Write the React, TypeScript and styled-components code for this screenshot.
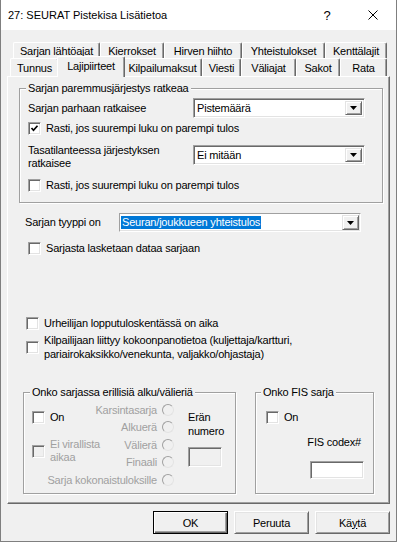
import React from "react";
import styled, { createGlobalStyle, css } from "styled-components";

const Global = createGlobalStyle`
  html, body { margin: 0; padding: 0; background: #ffffff; }
  #root { width: 397px; height: 542px; }
`;

const Win = styled.div`
  width: 397px;
  height: 542px;
  box-sizing: border-box;
  border: 1px solid #7f7f7f;
  border-top: none;
  display: flex;
  flex-direction: column;
  background: #f0f0f0;
  color: #000;
  font-family: "Liberation Sans", Arial, sans-serif;
  font-size: 11px;
  overflow: hidden;
`;

const TitleBar = styled.div`
  height: 30px;
  flex: none;
  display: flex;
  align-items: center;
  background: #ffffff;
`;

const TitleText = styled.div`
  flex: 1;
  padding-left: 7px;
  white-space: nowrap;
`;

const CaptionButton = styled.div`
  width: 46px;
  height: 30px;
  display: flex;
  align-items: center;
  justify-content: center;
  font-size: 13px;
`;

const Client = styled.div`
  flex: 1;
  display: flex;
  flex-direction: column;
  padding: 12px 6px 7px 6px;
  letter-spacing: -0.2px;
`;

const TabRow = styled.div<{ $indent: number; $h: number }>`
  display: flex;
  align-items: flex-end;
  height: ${(p) => p.$h}px;
  margin-left: ${(p) => p.$indent}px;
`;

const Tab = styled.div<{ $w: number; $active?: boolean }>`
  box-sizing: border-box;
  width: ${(p) => p.$w}px;
  height: 100%;
  display: flex;
  align-items: center;
  justify-content: center;
  white-space: nowrap;
  background: #f0f0f0;
  border-top: 1px solid #ffffff;
  border-left: 1px solid #ffffff;
  border-right: 1px solid #696969;
  box-shadow: inset -1px 0 0 #a0a0a0;
  border-radius: 2px 2px 0 0;
  ${(p) =>
    p.$active &&
    css`
      width: ${p.$w + 4}px;
      height: 21px;
      margin: 0 -2px -1px -2px;
      padding-bottom: 3px;
      position: relative;
      z-index: 2;
    `}
`;

const Panel = styled.div`
  box-sizing: border-box;
  width: 383px;
  height: 428px;
  flex: none;
  border: 1px solid;
  border-color: #ffffff #696969 #696969 #ffffff;
  box-shadow: inset -1px -1px 0 #a0a0a0;
  display: flex;
  flex-direction: column;
`;

const Group = styled.div<{ $w: number; $h: number; $ml?: number; $mt?: number }>`
  position: relative;
  box-sizing: border-box;
  flex: none;
  width: ${(p) => p.$w}px;
  height: ${(p) => p.$h}px;
  margin-left: ${(p) => p.$ml ?? 0}px;
  margin-top: ${(p) => p.$mt ?? 0}px;
  border: 1px solid #a0a0a0;
  box-shadow: inset 1px 1px 0 #ffffff, 1px 1px 0 #ffffff;
`;

const GroupTitle = styled.span<{ $left: number }>`
  position: absolute;
  top: -7px;
  left: ${(p) => p.$left}px;
  padding: 0 2px;
  line-height: 13px;
  background: #f0f0f0;
  white-space: nowrap;
`;

const GroupBody = styled.div<{ $pt: number; $pl: number; $pr?: number }>`
  display: flex;
  flex-direction: column;
  padding: ${(p) => p.$pt}px ${(p) => p.$pr ?? 0}px 0 ${(p) => p.$pl}px;
`;

const FieldRow = styled.div<{ $mt?: number; $ml?: number; $top?: boolean; $label: number }>`
  display: flex;
  align-items: ${(p) => (p.$top ? "flex-start" : "center")};
  margin-top: ${(p) => p.$mt ?? 0}px;
  margin-left: ${(p) => p.$ml ?? 0}px;
  & > span:first-child {
    width: ${(p) => p.$label}px;
    flex: none;
    line-height: 13px;
    margin-top: ${(p) => (p.$top ? -1 : 0)}px;
  }
`;

const Combo = styled.div<{ $w: number; $h: number; $flat?: boolean }>`
  box-sizing: border-box;
  width: ${(p) => p.$w}px;
  height: ${(p) => p.$h}px;
  flex: none;
  display: flex;
  align-items: center;
  background: #ffffff;
  border: 1px solid;
  border-color: #a0a0a0 #ffffff #ffffff #a0a0a0;
  box-shadow: ${(p) =>
    p.$flat ? "inset -1px -1px 0 #e3e3e3" : "inset 1px 1px 0 #696969, inset -1px -1px 0 #e3e3e3"};
  padding: ${(p) => (p.$flat ? "1px" : "2px")};
`;

const ComboText = styled.span<{ $selected?: boolean }>`
  flex: 1;
  padding-left: ${(p) => (p.$selected ? 0 : 1)}px;
  white-space: nowrap;
  line-height: 13px;
  ${(p) =>
    p.$selected &&
    css`
      flex: none;
      margin-right: auto;
      background: #0078d7;
      color: #ffffff;
      padding: 0 1px;
    `}
`;

const DropButton = styled.div`
  box-sizing: border-box;
  width: 17px;
  height: 100%;
  flex: none;
  display: flex;
  align-items: center;
  justify-content: center;
  background: #f0f0f0;
  border: 1px solid;
  border-color: #e3e3e3 #696969 #696969 #e3e3e3;
  box-shadow: inset 1px 1px 0 #ffffff, inset -1px -1px 0 #a0a0a0;
`;

const CheckLabel = styled.label<{ $ml?: number; $mt?: number; $disabled?: boolean; $lh?: number }>`
  display: flex;
  align-items: center;
  gap: 5px;
  margin-left: ${(p) => p.$ml ?? 0}px;
  margin-top: ${(p) => p.$mt ?? 0}px;
  min-height: 15px;
  line-height: ${(p) => p.$lh ?? 13}px;
  color: ${(p) => (p.$disabled ? "#a0a0a0" : "#000")};
`;

const Box = styled.span<{ $disabled?: boolean }>`
  box-sizing: border-box;
  width: 13px;
  height: 13px;
  flex: none;
  display: flex;
  align-items: center;
  justify-content: center;
  border: 1px solid;
  border-color: #a0a0a0 #ffffff #ffffff #a0a0a0;
  box-shadow: inset 1px 1px 0 #696969, inset -1px -1px 0 #e3e3e3;
  background: ${(p) => (p.$disabled ? "#f0f0f0" : "#ffffff")};
`;

const Plain = styled.div<{ $mt?: number; $ml?: number }>`
  display: flex;
  flex-direction: column;
  margin-top: ${(p) => p.$mt ?? 0}px;
  margin-left: ${(p) => p.$ml ?? 0}px;
`;

const BottomGroups = styled.div`
  display: flex;
  gap: 19px;
  margin-top: 31px;
  margin-left: 15px;
`;

const EraGrid = styled.div`
  display: grid;
  grid-template-columns: 142px 40px;
  column-gap: 14px;
  padding: 8px 0 0 8px;
`;

const LeftCol = styled.div`
  grid-area: 1 / 1;
  justify-self: start;
  display: flex;
  flex-direction: column;
`;

const RadioCol = styled.div`
  grid-area: 1 / 1;
  justify-self: end;
  display: flex;
  flex-direction: column;
  align-items: flex-end;
  color: #a0a0a0;
`;

const RadioRow = styled.div`
  height: 17.5px;
  display: flex;
  align-items: center;
  gap: 5px;
  white-space: nowrap;
`;

const Radio = styled.span`
  box-sizing: border-box;
  width: 12px;
  height: 12px;
  flex: none;
  border-radius: 50%;
  border: 1px solid;
  border-color: #a0a0a0 #e3e3e3 #e3e3e3 #a0a0a0;
  background: #f0f0f0;
`;

const RightCol = styled.div<{ $align?: string; $pr?: number }>`
  display: flex;
  flex-direction: column;
  align-items: ${(p) => p.$align ?? "flex-start"};
  padding-right: ${(p) => p.$pr ?? 0}px;
`;

const Lines = styled.div<{ $mt?: number; $lh: number; $mr?: number }>`
  margin-top: ${(p) => p.$mt ?? 0}px;
  margin-right: ${(p) => p.$mr ?? 0}px;
  line-height: ${(p) => p.$lh}px;
  white-space: nowrap;
`;

const TextBox = styled.div<{ $w: number; $h: number; $mt: number; $disabled?: boolean }>`
  box-sizing: border-box;
  width: ${(p) => p.$w}px;
  height: ${(p) => p.$h}px;
  margin-top: ${(p) => p.$mt}px;
  border: 1px solid;
  border-color: #a0a0a0 #ffffff #ffffff #a0a0a0;
  box-shadow: inset 1px 1px 0 #696969, inset -1px -1px 0 #e3e3e3;
  background: ${(p) => (p.$disabled ? "#f0f0f0" : "#ffffff")};
`;

const ButtonBar = styled.div`
  display: flex;
  justify-content: flex-end;
  gap: 6px;
  margin-top: 7px;
  width: 383px;
`;

const Button = styled.div<{ $default?: boolean }>`
  box-sizing: border-box;
  width: 75px;
  height: 23px;
  display: flex;
  align-items: center;
  justify-content: center;
  background: #f0f0f0;
  border: 1px solid;
  ${(p) =>
    p.$default
      ? css`
          border-color: #000000;
          box-shadow: inset 1px 1px 0 #ffffff, inset -1px -1px 0 #696969, inset -2px -2px 0 #a0a0a0;
        `
      : css`
          border-color: #ffffff #696969 #696969 #ffffff;
          box-shadow: inset 1px 1px 0 #e3e3e3, inset -1px -1px 0 #a0a0a0;
        `}
`;

const Mnemonic = styled.span`
  text-decoration: underline;
`;

const Arrow = () => (
  <svg width="7" height="4" viewBox="0 0 7 4">
    <path d="M0 0 H7 L3.5 4 Z" fill="#000" />
  </svg>
);

const Tick = () => (
  <svg width="9" height="9" viewBox="0 0 9 9">
    <polyline points="1.5,4 3.5,6.3 7.5,1.8" fill="none" stroke="#000" strokeWidth="1.7" />
  </svg>
);

const CloseIcon = () => (
  <svg width="10" height="10" viewBox="0 0 10 10">
    <path d="M0.5 0.5 L9.5 9.5 M9.5 0.5 L0.5 9.5" stroke="#000" strokeWidth="1" fill="none" />
  </svg>
);

const row1 = [
  { t: "Sarjan lähtöajat", w: 87 },
  { t: "Kierrokset", w: 64 },
  { t: "Hirven hiihto", w: 78 },
  { t: "Yhteistulokset", w: 83 },
  { t: "Kenttälajit", w: 62 },
];

const row2 = [
  { t: "Tunnus", w: 49 },
  { t: "Lajipiirteet", w: 64, active: true },
  { t: "Kilpailumaksut", w: 79 },
  { t: "Viesti", w: 39 },
  { t: "Väliajat", w: 55 },
  { t: "Sakot", w: 44 },
  { t: "Rata", w: 47 },
];

const radios = ["Karsintasarja", "Alkuerä", "Välierä", "Finaali", "Sarja kokonaistuloksille"];

export default function App() {
  return (
    <>
      <Global />
      <Win>
        <TitleBar>
          <TitleText>27: SEURAT Pistekisa Lisätietoa</TitleText>
          <CaptionButton>?</CaptionButton>
          <CaptionButton>
            <CloseIcon />
          </CaptionButton>
        </TitleBar>
        <Client>
          <TabRow $indent={6} $h={16}>
            {row1.map((t) => (
              <Tab key={t.t} $w={t.w}>
                {t.t}
              </Tab>
            ))}
          </TabRow>
          <TabRow $indent={3} $h={18}>
            {row2.map((t) => (
              <Tab key={t.t} $w={t.w} $active={t.active}>
                {t.t}
              </Tab>
            ))}
          </TabRow>
          <Panel>
            <Group $w={364} $h={115} $ml={11} $mt={11}>
              <GroupTitle $left={6}>Sarjan paremmusjärjestys ratkeaa</GroupTitle>
              <GroupBody $pt={9} $pl={8}>
                <FieldRow $label={165}>
                  <span>Sarjan parhaan ratkaisee</span>
                  <Combo $w={172} $h={20}>
                    <ComboText>Pistemäärä</ComboText>
                    <DropButton>
                      <Arrow />
                    </DropButton>
                  </Combo>
                </FieldRow>
                <CheckLabel $mt={3}>
                  <Box>
                    <Tick />
                  </Box>
                  Rasti, jos suurempi luku on parempi tulos
                </CheckLabel>
                <FieldRow $label={165} $mt={9} $top>
                  <span>
                    Tasatilanteessa järjestyksen
                    <br />
                    ratkaisee
                  </span>
                  <Combo $w={172} $h={20}>
                    <ComboText>Ei mitään</ComboText>
                    <DropButton>
                      <Arrow />
                    </DropButton>
                  </Combo>
                </FieldRow>
                <CheckLabel $mt={8}>
                  <Box />
                  Rasti, jos suurempi luku on parempi tulos
                </CheckLabel>
              </GroupBody>
            </Group>

            <FieldRow $label={94} $mt={10} $ml={17}>
              <span>Sarjan tyyppi on</span>
              <Combo $w={242} $h={19} $flat>
                <ComboText $selected>Seuran/joukkueen yhteistulos</ComboText>
                <DropButton>
                  <Arrow />
                </DropButton>
              </Combo>
            </FieldRow>

            <CheckLabel $ml={20} $mt={9}>
              <Box />
              Sarjasta lasketaan dataa sarjaan
            </CheckLabel>

            <Plain $mt={60} $ml={18}>
              <CheckLabel>
                <Box />
                Urheilijan lopputuloskentässä on aika
              </CheckLabel>
              <CheckLabel $mt={2} $lh={14}>
                <Box />
                <span>
                  Kilpailijaan liittyy kokoonpanotietoa (kuljettaja/kartturi,
                  <br />
                  pariairokaksikko/venekunta, valjakko/ohjastaja)
                </span>
              </CheckLabel>
            </Plain>

            <BottomGroups>
              <Group $w={213} $h={102}>
                <GroupTitle $left={6}>Onko sarjassa erillisiä alku/välieriä</GroupTitle>
                <EraGrid>
                  <LeftCol>
                    <CheckLabel $mt={9}>
                      <Box />
                      On
                    </CheckLabel>
                    <CheckLabel $mt={13} $disabled>
                      <Box $disabled />
                      <span>
                        Ei virallista
                        <br />
                        aikaa
                      </span>
                    </CheckLabel>
                  </LeftCol>
                  <RadioCol>
                    {radios.map((r) => (
                      <RadioRow key={r}>
                        {r}
                        <Radio />
                      </RadioRow>
                    ))}
                  </RadioCol>
                  <RightCol>
                    <Lines $mt={9} $lh={14}>
                      Erän
                      <br />
                      numero
                    </Lines>
                    <TextBox $w={34} $h={20} $mt={9} $disabled />
                  </RightCol>
                </EraGrid>
              </Group>
              <Group $w={119} $h={102}>
                <GroupTitle $left={5}>Onko FIS sarja</GroupTitle>
                <GroupBody $pt={17} $pl={10}>
                  <CheckLabel>
                    <Box />
                    On
                  </CheckLabel>
                  <RightCol $align="flex-end" $pr={9}>
                    <Lines $mt={11} $lh={13} $mr={3}>
                      FIS codex#
                    </Lines>
                    <TextBox $w={54} $h={18} $mt={12} />
                  </RightCol>
                </GroupBody>
              </Group>
            </BottomGroups>
          </Panel>
          <ButtonBar>
            <Button $default>OK</Button>
            <Button>Peruuta</Button>
            <Button>
              <span>
                Kä<Mnemonic>y</Mnemonic>tä
              </span>
            </Button>
          </ButtonBar>
        </Client>
      </Win>
    </>
  );
}
